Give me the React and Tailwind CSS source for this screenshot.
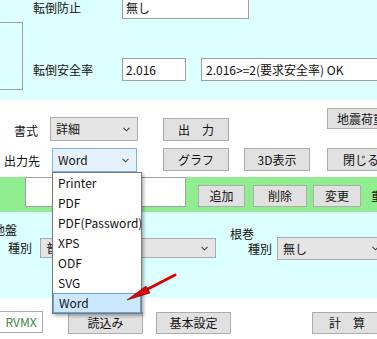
import React from 'react';

const font = "font-['Noto_Sans_CJK_JP',sans-serif] text-[12px] text-[#111]";

const Chevron = () => (
  <svg width="7" height="5" viewBox="0 0 7 5" className="shrink-0">
    <path d="M0.5 0.8 L3.5 3.8 L6.5 0.8" fill="none" stroke="#444" strokeWidth="1.1" />
  </svg>
);

const Btn = ({ children, className = '' }) => (
  <div className={`flex items-center justify-center shrink-0 bg-[#e1e1e1] border border-[#adadad] ${className}`}>
    {children}
  </div>
);

const Select = ({ value, className = '', focused = false }) => (
  <div
    className={`flex items-center justify-between shrink-0 pl-[5px] pr-[7px] border ${
      focused ? 'bg-[#e5f1fb] border-[#7eb4ea]' : 'bg-[#e5e5e5] border-[#adadad]'
    } ${className}`}
  >
    <span>{value}</span>
    <Chevron />
  </div>
);

const Field = ({ children, className = '' }) => (
  <div className={`flex items-center shrink-0 bg-white border border-[#a0a0a0] pl-[3px] ${className}`}>
    {children}
  </div>
);

const options = ['Printer', 'PDF', 'PDF(Password)', 'XPS', 'ODF', 'SVG', 'Word'];

export default function App() {
  return (
    <div className={`relative w-[377px] h-[339px] overflow-hidden bg-white ${font}`}>
      {/* 上段：転倒 */}
      <div className="h-[100px] bg-[#dcffff] flex">
        <div className="w-[25px] -ml-[2px] mt-[22px] h-[68px] border border-[#a0a0a0] shrink-0"></div>
        <div className="ml-[10px] flex flex-col">
          <div className="flex items-center h-[23px] -mt-[4px]">
            <span className="w-[89px] shrink-0">転倒防止</span>
            <Field className="w-[127px] h-[23px]">無し</Field>
          </div>
          <div className="flex items-center h-[23px] mt-[39px]">
            <span className="w-[89px] shrink-0">転倒安全率</span>
            <Field className="w-[64px] h-[23px]">2.016</Field>
            <Field className="ml-[15px] w-[190px] h-[23px] pl-[4px]">2.016&gt;=2(要求安全率) OK</Field>
          </div>
        </div>
      </div>

      {/* 出力設定 */}
      <div className="h-[77px] pt-[8px] flex flex-col">
        <div className="h-[40px] flex items-start">
          <span className="w-[40px] text-right pr-[2px] mt-[14px] shrink-0">書式</span>
          <Select value="詳細" className="ml-[10px] w-[88px] h-[24px] mt-[9px]" />
          <Btn className="ml-[25px] w-[66px] h-[23px] mt-[10px]">出　力</Btn>
          <Btn className="ml-[98px] w-[68px] h-[21px]">地震荷重</Btn>
        </div>
        <div className="h-[24px] flex items-start">
          <span className="w-[40px] text-right mt-[4px] shrink-0">出力先</span>
          <Select value="Word" focused className="ml-[12px] w-[85px] h-[24px]" />
          <Btn className="ml-[26px] w-[66px] h-[23px]">グラフ</Btn>
          <Btn className="ml-[15px] w-[66px] h-[23px]">3D表示</Btn>
          <Btn className="ml-[17px] w-[68px] h-[23px]">閉じる</Btn>
        </div>
      </div>

      {/* 緑帯 */}
      <div className="h-[35px] bg-[#90ee90] flex items-start">
        <div className="ml-[25px] w-[161px] h-[30px] bg-white border border-[#a0a0a0] shrink-0"></div>
        <Btn className="ml-[12px] w-[47px] h-[22px] mt-[8px]">追加</Btn>
        <Btn className="ml-[8px] w-[54px] h-[22px] mt-[8px]">削除</Btn>
        <Btn className="ml-[6px] w-[48px] h-[22px] mt-[8px]">変更</Btn>
        <span className="ml-[10px] mt-[10px] whitespace-nowrap">重量</span>
      </div>

      {/* 地盤・根巻 */}
      <div className="h-[86px] bg-[#dcffff] flex items-start">
        <div className="flex flex-col pt-[9px] shrink-0">
          <span className="-ml-[7px] leading-[17px]">地盤</span>
          <div className="flex items-center h-[20px]">
            <span className="ml-[8px] shrink-0">種別</span>
            <Select value="普通" className="ml-[8px] w-[176px] h-[20px]" />
          </div>
        </div>
        <div className="ml-[14px] flex flex-col pt-[13px] shrink-0">
          <span className="leading-[17px]">根巻</span>
          <div className="flex items-center h-[23px] -mt-[5px]">
            <span className="ml-[18px] shrink-0">種別</span>
            <Select value="無し" className="ml-[5px] w-[110px] h-[23px]" />
          </div>
        </div>
      </div>

      {/* 下段ボタン */}
      <div className="h-[41px] pt-[13px] flex items-start">
        <div className="-ml-[1px] w-[44px] h-[22px] flex items-center justify-center bg-white border border-[#adadad] text-[#3a8a3a] shrink-0">
          RVMX
        </div>
        <Btn className="ml-[25px] w-[75px] h-[22px] mt-[1px]">読込み</Btn>
        <Btn className="ml-[13px] w-[75px] h-[22px] mt-[1px]">基本設定</Btn>
        <Btn className="ml-[81px] w-[70px] h-[22px] mt-[1px]">計　算</Btn>
      </div>

      {/* ドロップダウン */}
      <div className="absolute left-[52px] top-[172px] w-[90px] bg-white border border-[#7a7a7a] shadow-[2px_2px_3px_rgba(0,0,0,0.3)]">
        {options.map((o) => (
          <div
            key={o}
            className={`h-[20px] flex items-center pl-[5px] whitespace-nowrap ${
              o === 'Word' ? 'bg-[#cce8ff] border border-[#62a8e0] pl-[4px]' : ''
            }`}
          >
            {o}
          </div>
        ))}
      </div>

      {/* 赤い矢印 */}
      <svg className="absolute left-0 top-0 pointer-events-none" width="377" height="339">
        <line x1="175" y1="275" x2="142" y2="292" stroke="#e00000" strokeWidth="3" strokeLinecap="round" />
        <polygon points="127,300 146,286 150,293" fill="#e00000" stroke="#600" strokeWidth="0.6" />
      </svg>
    </div>
  );
}
